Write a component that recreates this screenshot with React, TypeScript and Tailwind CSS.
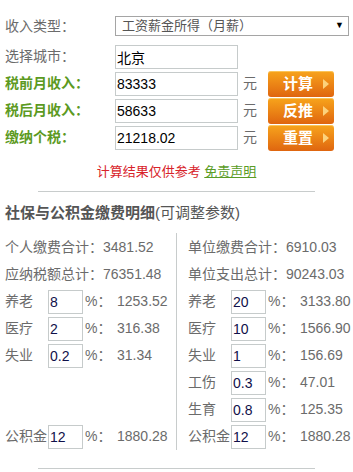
import { ReactNode } from "react";

const FONT = { fontFamily: '"Liberation Sans", "Noto Sans CJK SC", sans-serif' };

function OrangeButton({ children }: { children: ReactNode }) {
  return (
    <button className="relative w-[66px] h-[26px] rounded-[3px] bg-gradient-to-b from-[#f7a41c] to-[#df650f] text-white font-bold text-[15px] leading-[26px] text-center pr-[6px] shadow-[inset_0_1px_0_rgba(255,230,150,0.5)]">
      {children}
      <svg className="absolute right-[5px] top-[8px]" width="6" height="10" viewBox="0 0 6 10">
        <polygon points="0,0 6,5 0,10" fill="#fcd27c" />
      </svg>
    </button>
  );
}

function FieldRow({
  label,
  value,
  green,
  unit,
  button,
}: {
  label: string;
  value: string;
  green?: boolean;
  unit?: boolean;
  button?: string;
}) {
  return (
    <div className="flex items-center h-[27px]">
      <span
        className={`w-[110px] text-[14px] ${green ? "text-[#5c9a1f] font-bold" : "text-[#6b6b6b]"}`}
      >
        {label}
      </span>
      <input
        defaultValue={value}
        className="w-[123px] h-[24px] border border-[#c6cbcb] px-[1px] text-[14px] text-black outline-none"
        style={FONT}
      />
      {unit && <span className="ml-[5px] text-[14px] text-[#6b6b6b]">元</span>}
      {button && (
        <div className="ml-[11px]">
          <OrangeButton>{button}</OrangeButton>
        </div>
      )}
    </div>
  );
}

function RateRow({ label, rate, amount }: { label: string; rate: string; amount: string }) {
  return (
    <div className="flex items-center h-[27px] text-[14px] text-[#6b6b6b]">
      <span className="w-[43px]">{label}</span>
      <input
        defaultValue={rate}
        className="w-[35px] h-[24px] border border-[#c6cbcb] px-[1px] text-[14px] text-[#10104a] outline-none"
        style={FONT}
      />
      <span className="ml-[2px] w-[32px]">%：</span>
      <span>{amount}</span>
    </div>
  );
}

function TotalRow({ label, value }: { label: string; value: string }) {
  return (
    <div className="flex items-center h-[27px] text-[14px] text-[#6b6b6b]">
      <span>{label}</span>
      <span>{value}</span>
    </div>
  );
}

export default function App() {
  return (
    <div className="w-[353px] h-[472px] bg-white overflow-hidden" style={FONT}>
      <div className="pt-[12px] pl-[5px]">
        <div className="flex items-center h-[28px] mb-[3px]">
          <span className="w-[110px] text-[14px] text-[#6b6b6b]">收入类型：</span>
          <div className="w-[234px] h-[20px] border border-[#a5a5a5] flex items-center justify-between pl-[6px] pr-[4px] text-[13px] text-[#555]">
            <span>工资薪金所得（月薪）</span>
            <span className="text-[9px] text-black">▼</span>
          </div>
        </div>
        <FieldRow label="选择城市：" value="北京" />
        <FieldRow label="税前月收入：" value="83333" green unit button="计算" />
        <FieldRow label="税后月收入：" value="58633" green unit button="反推" />
        <FieldRow label="缴纳个税：" value="21218.02" green unit button="重置" />
      </div>

      <div className="mt-[11px] text-center text-[13px] leading-[20px]">
        <span className="text-[#d8232a]">计算结果仅供参考</span>{" "}
        <a className="text-[#5a9c26] underline">免责声明</a>
      </div>

      <div className="mx-[38px] mt-[9px] h-px bg-[#c8cccc]" />

      <h2 className="mt-[10px] pl-[5px] text-[15px] leading-[22px] text-[#555]">
        <span className="font-bold">社保与公积金缴费明细</span>
        <span>(可调整参数)</span>
      </h2>

      <div className="mt-[9px] flex">
        <div className="w-[171px] ml-[5px] pt-[1px]">
          <TotalRow label="个人缴费合计：" value="3481.52" />
          <TotalRow label="应纳税额总计：" value="76351.48" />
          <RateRow label="养老" rate="8" amount="1253.52" />
          <RateRow label="医疗" rate="2" amount="316.38" />
          <RateRow label="失业" rate="0.2" amount="31.34" />
          <div className="h-[54px]" />
          <RateRow label="公积金" rate="12" amount="1880.28" />
        </div>
        <div className="w-px h-[217px] bg-[#c8cccc]" />
        <div className="ml-[11px] pt-[1px]">
          <TotalRow label="单位缴费合计：" value="6910.03" />
          <TotalRow label="单位支出总计：" value="90243.03" />
          <RateRow label="养老" rate="20" amount="3133.80" />
          <RateRow label="医疗" rate="10" amount="1566.90" />
          <RateRow label="失业" rate="1" amount="156.69" />
          <RateRow label="工伤" rate="0.3" amount="47.01" />
          <RateRow label="生育" rate="0.8" amount="125.35" />
          <RateRow label="公积金" rate="12" amount="1880.28" />
        </div>
      </div>

      <div className="mx-[38px] mt-[18px] h-px bg-[#c8cccc]" />
    </div>
  );
}
